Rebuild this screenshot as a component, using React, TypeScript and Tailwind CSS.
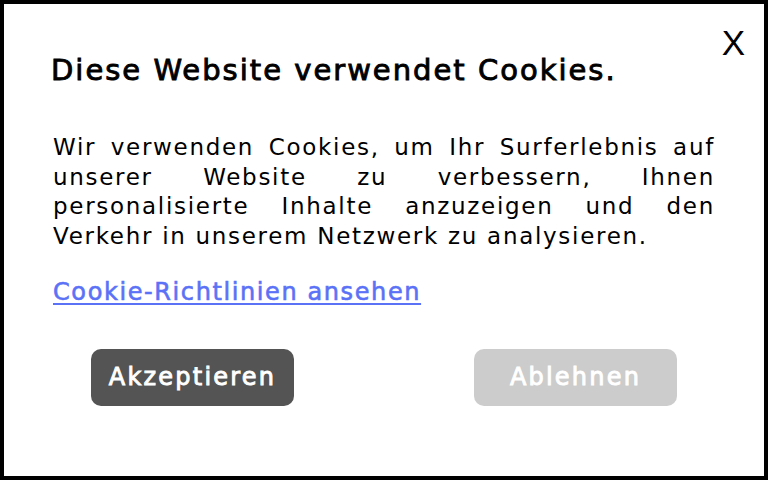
import React from "react";

// Cookie consent dialog — fixed 768x480 card with black frame.
// Reference face is a wide geometric sans; DejaVu Sans + tracking is the closest we have.

const font = { fontFamily: '"DejaVu Sans", "Liberation Sans", sans-serif' };

const lines = [
  "Wir verwenden Cookies, um Ihr Surferlebnis auf",
  "unserer Website zu verbessern, Ihnen",
  "personalisierte Inhalte anzuzeigen und den",
];

export default function App() {
  return (
    <div
      className="relative w-[768px] h-[480px] border-4 border-black bg-white text-black"
      style={font}
    >
      <button
        aria-label="Schließen"
        className="absolute right-[19px] top-[21px] text-[35px] leading-none text-black"
        style={{ fontFamily: '"Liberation Sans", sans-serif' }}
      >
        X
      </button>

      <div className="flex flex-col pl-[47px] pr-[49px] pt-[49px]">
        <h1 className="text-[29px] leading-[34px] font-normal tracking-[2px] [-webkit-text-stroke:0.9px_currentColor]">
          Diese Website verwendet Cookies.
        </h1>

        <p className="mt-[46px] pl-[2px] text-[23px] leading-[29.7px] tracking-[1.7px]">
          {lines.map((l) => (
            <span key={l} className="block text-justify [text-align-last:justify]">
              {l}
            </span>
          ))}
          <span className="block">Verkehr in unserem Netzwerk zu analysieren.</span>
        </p>

        <a
          href="#"
          className="mt-[25px] pl-[2px] self-start text-[24px] leading-[30px] tracking-[1.6px] text-[#5b72f7] underline underline-offset-[3px] decoration-[2px] [-webkit-text-stroke:0.6px_currentColor]"
        >
          Cookie-Richtlinien ansehen
        </a>
      </div>

      <div className="flex justify-between px-[87px] mt-[42px]">
        <button className="w-[203px] h-[57px] rounded-[10px] bg-[#545454] text-white text-[24px] tracking-[2.2px] [-webkit-text-stroke:0.9px_currentColor]">
          Akzeptieren
        </button>
        <button className="w-[203px] h-[57px] rounded-[10px] bg-[#cccccc] text-white text-[24px] tracking-[2.2px] [-webkit-text-stroke:0.9px_currentColor]">
          Ablehnen
        </button>
      </div>
    </div>
  );
}
